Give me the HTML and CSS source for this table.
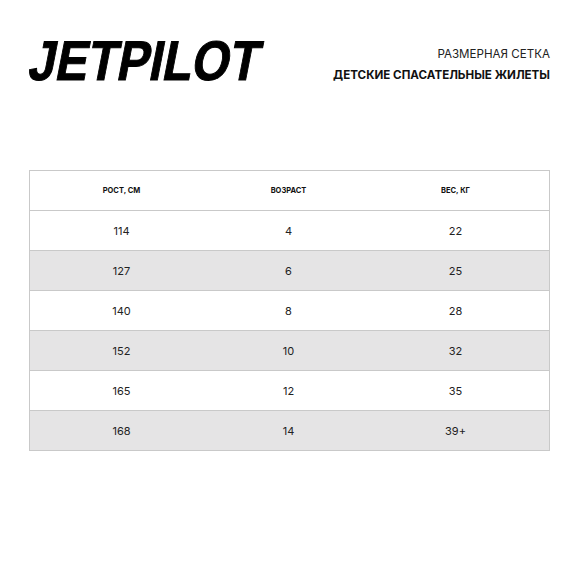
FILE: index.html
```html
<!DOCTYPE html>
<html lang="ru">
<head>
<meta charset="utf-8">
<link rel="stylesheet" href="styles.css">
</head>
<body>
<div class="page">
  <header class="top">
    <div class="logo"><span class="logo-text">JETPILOT</span></div>
    <div class="titles">
      <div class="t1">РАЗМЕРНАЯ СЕТКА</div>
      <div class="t2">ДЕТСКИЕ СПАСАТЕЛЬНЫЕ ЖИЛЕТЫ</div>
    </div>
  </header>
  <div class="table">
    <div class="row head"><div>РОСТ, СМ</div><div>ВОЗРАСТ</div><div>ВЕС, КГ</div></div>
    <div class="row"><div>114</div><div>4</div><div>22</div></div>
    <div class="row alt"><div>127</div><div>6</div><div>25</div></div>
    <div class="row"><div>140</div><div>8</div><div>28</div></div>
    <div class="row alt"><div>152</div><div>10</div><div>32</div></div>
    <div class="row"><div>165</div><div>12</div><div>35</div></div>
    <div class="row alt"><div>168</div><div>14</div><div>39+</div></div>
  </div>
</div>
</body>
</html>
```
FILE: styles.css
```css
html, body { margin: 0; padding: 0; background: #fff; }
body { font-family: Inter, "Liberation Sans", sans-serif; color: #111; }
.page { width: 580px; height: 580px; padding: 0 30px 0 29px; box-sizing: border-box; }
.top { display: flex; justify-content: space-between; align-items: flex-start; padding-top: 33px; height: 170px; box-sizing: border-box; }
.logo { width: 236px; height: 50px; padding-left: 7px; overflow: visible; }
.logo-text {
  display: inline-block;
  font-family: "Liberation Sans", sans-serif;
  font-weight: 700;
  font-size: 56px;
  line-height: 56px;
  letter-spacing: 0px;
  color: #000;
  -webkit-text-stroke: 1px #000;
  transform-origin: left top;
  transform: skewX(-11deg) scaleX(0.86);
}
.titles { text-align: right; padding-top: 14px; }
.t1 { font-size: 11.6px; line-height: 14px; color: #222; }
.t2 { font-size: 11.6px; font-weight: 700; line-height: 14px; margin-top: 7px; color: #111; }
.table { border: 1px solid #c9c9c9; width: 521px; box-sizing: border-box; }
.row { display: grid; grid-template-columns: 1fr 1fr 1fr; height: 40px; align-items: center; text-align: center; border-top: 1px solid #c9c9c9; box-sizing: border-box; padding: 0 10px 0 8px; font-size: 11px; color: #222; }
.row.head { border-top: none; height: 39px; font-size: 7.5px; font-weight: 700; color: #111; }
.row.alt { background: #e5e4e5; }
```
